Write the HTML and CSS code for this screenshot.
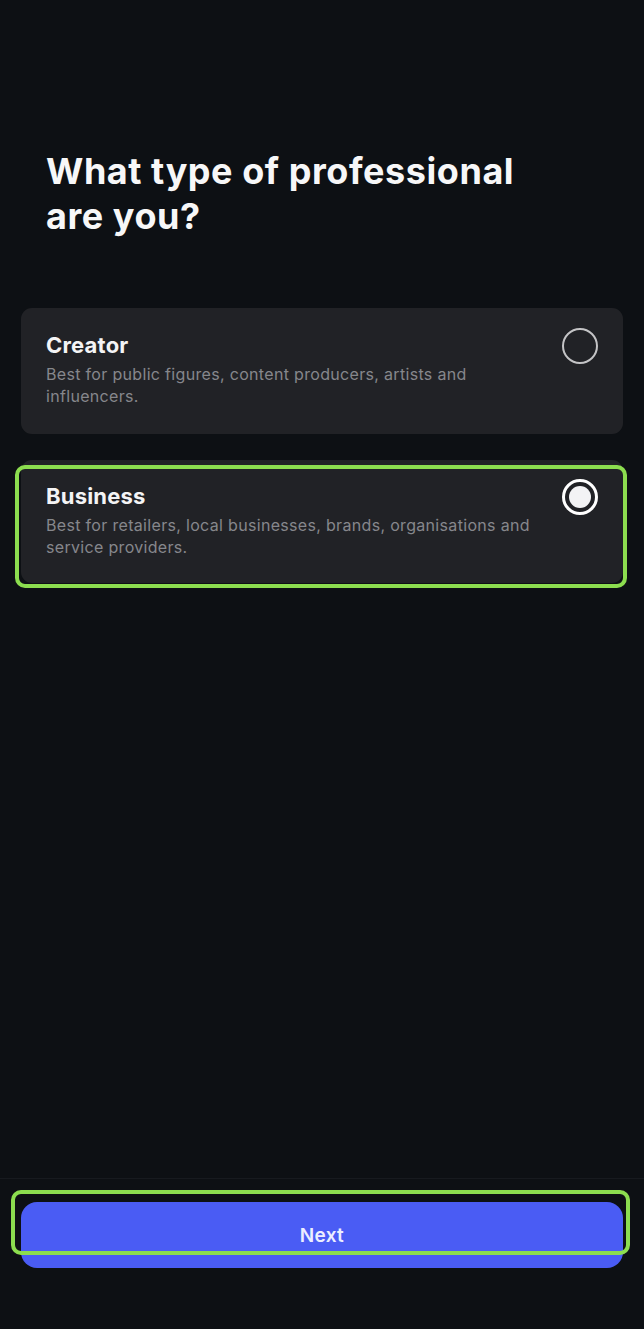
FILE: index.html
```html
<!DOCTYPE html>
<html lang="en">
<head>
<meta charset="utf-8">
<title>What type of professional are you?</title>
<link rel="stylesheet" href="styles.css">
</head>
<body>
<div class="screen">
  <main class="content">
    <h1 class="heading">What type of professional<br>are you?</h1>
    <div class="options">
      <div class="option">
        <div class="option-text">
          <div class="option-title">Creator</div>
          <div class="option-desc">Best for public figures, content producers, artists and influencers.</div>
        </div>
        <span class="radio"></span>
      </div>
      <div class="option option-selected">
        <div class="option-text">
          <div class="option-title">Business</div>
          <div class="option-desc">Best for retailers, local businesses, brands, organisations and service providers.</div>
        </div>
        <span class="radio radio-checked"></span>
        <span class="highlight highlight-card"></span>
      </div>
    </div>
  </main>
  <footer class="footer">
    <button class="next-btn" type="button">Next<span class="highlight highlight-btn"></span></button>
  </footer>
</div>
</body>
</html>
```
FILE: styles.css
```css
* { box-sizing: border-box; }
html, body { margin: 0; padding: 0; }
body {
  background: #0d1014;
  font-family: Inter, "Noto Sans", sans-serif;
  color: #f4f4f5;
}
.screen {
  height: 1329px;
  display: flex;
  flex-direction: column;
}
.content {
  flex: 1;
  padding: 149px 21px 0 21px;
}
.heading {
  margin: 0 0 0 25px;
  font-size: 36px;
  line-height: 45px;
  font-weight: 700;
  letter-spacing: 0.55px;
  color: #f7f7f8;
}
.options {
  margin-top: 69px;
  display: flex;
  flex-direction: column;
  gap: 26px;
}
.option {
  position: relative;
  display: flex;
  justify-content: space-between;
  align-items: flex-start;
  background: #212226;
  border-radius: 11px;
  padding: 20px 25px 29px 25px;
  height: 126px;
}
.option-selected { height: 123px; padding-top: 19px; }
.option-text { padding-top: 3px; max-width: 495px; }
.option-title {
  font-size: 22px;
  line-height: 28px;
  font-weight: 700;
  letter-spacing: 0.2px;
  color: #f4f4f5;
}
.option-desc {
  margin-top: 4px;
  font-size: 16px;
  line-height: 22px;
  letter-spacing: 0.32px;
  color: #86878c;
}
.radio {
  flex: none;
  width: 36px;
  height: 36px;
  border-radius: 50%;
  border: 2px solid #c4c4c6;
}
.radio-checked {
  border: 3px solid #ffffff;
  padding: 4px;
  background: #f3f3f5;
  background-clip: content-box;
}
.highlight {
  position: absolute;
  border: 4px solid #8cdd4f;
  border-radius: 10px;
  pointer-events: none;
}
.highlight-card {
  left: -6px;
  right: -4px;
  top: 5px;
  bottom: -5px;
}
.footer {
  border-top: 1px solid #171a1f;
  padding: 23px 21px 61px 21px;
}
.next-btn {
  position: relative;
  display: block;
  width: 100%;
  height: 66px;
  border: none;
  border-radius: 16px;
  background: #4a5cf4;
  color: #eceeff;
  font-family: Inter, "Noto Sans", sans-serif;
  font-size: 19px;
  font-weight: 600;
  letter-spacing: 0.3px;
  padding: 0;
}
.highlight-btn {
  left: -10px;
  right: -7px;
  top: -12px;
  bottom: 13px;
}
```
